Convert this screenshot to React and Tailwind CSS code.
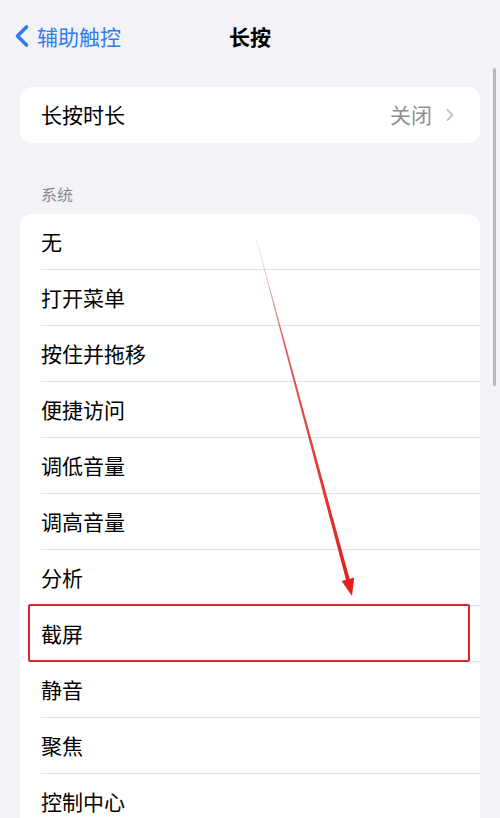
import { ChevronLeft, ChevronRight } from 'lucide-react'

const items = [
  '无',
  '打开菜单',
  '按住并拖移',
  '便捷访问',
  '调低音量',
  '调高音量',
  '分析',
  '截屏',
  '静音',
  '聚焦',
  '控制中心',
]

export default function App() {
  return (
    <div className="relative h-[818px] w-[500px] overflow-hidden bg-[#f2f2f7] font-['Noto_Sans_CJK_SC','Noto_Sans',sans-serif] text-black">
      {/* Nav bar */}
      <header className="grid h-[72px] grid-cols-[1fr_auto_1fr] items-center">
        <div className="flex items-center pl-[4px] text-[#2f7cf0]">
          <ChevronLeft className="h-[36px] w-[36px]" strokeWidth={2.4} />
          <span className="-ml-[3px] text-[21px] leading-none">辅助触控</span>
        </div>
        <h1 className="text-[21px] font-semibold leading-none">长按</h1>
        <div />
      </header>

      {/* Duration */}
      <div className="mx-[20px] mt-[15px] flex h-[56px] items-center rounded-[12px] bg-white pl-[21px] pr-[20px]">
        <span className="flex-1 text-[21px]">长按时长</span>
        <span className="text-[21px] text-[#8e8e93]">关闭</span>
        <ChevronRight className="ml-[8px] h-[20px] w-[20px] text-[#c4c4c7]" strokeWidth={2.4} />
      </div>

      {/* Section label */}
      <div className="pl-[41px] pt-[40px] pb-[9px] text-[16px] leading-[22px] text-[#8a8a8e]">系统</div>

      {/* Action list */}
      <div className="mx-[20px] rounded-[12px] bg-white">
        {items.map((label, i) => (
          <div key={label} className="relative flex h-[56px] items-center pl-[21px]">
            <span className="text-[21px]">{label}</span>
            {i < items.length - 1 && (
              <div className="absolute bottom-0 left-[21px] right-0 h-px bg-[#e2e2e5]" />
            )}
            {label === '截屏' && (
              <div className="absolute left-[8px] right-[10px] top-[-2px] bottom-0 rounded-[2px] border-2 border-[#d9262b]" />
            )}
          </div>
        ))}
      </div>

      {/* Scroll indicator */}
      <div className="absolute right-[4px] top-[68px] h-[318px] w-[3px] rounded-full bg-[#b7b7bb]" />

      {/* Annotation arrow */}
      <svg className="pointer-events-none absolute inset-0" width="500" height="818" viewBox="0 0 500 818">
        <defs>
          <linearGradient id="shaft" x1="256" y1="238" x2="349" y2="580" gradientUnits="userSpaceOnUse">
            <stop offset="0" stopColor="#c9a7a7" stopOpacity="0.3" />
            <stop offset="0.3" stopColor="#d94a44" stopOpacity="0.9" />
            <stop offset="1" stopColor="#e0211c" />
          </linearGradient>
        </defs>
        <polygon points="256.3,237.9 349.8,579.5 346.2,580.5 255.7,238.1" fill="url(#shaft)" />
        <polygon points="352,596 354.2,577.6 341.6,581" fill="#e0211c" />
      </svg>
    </div>
  )
}
